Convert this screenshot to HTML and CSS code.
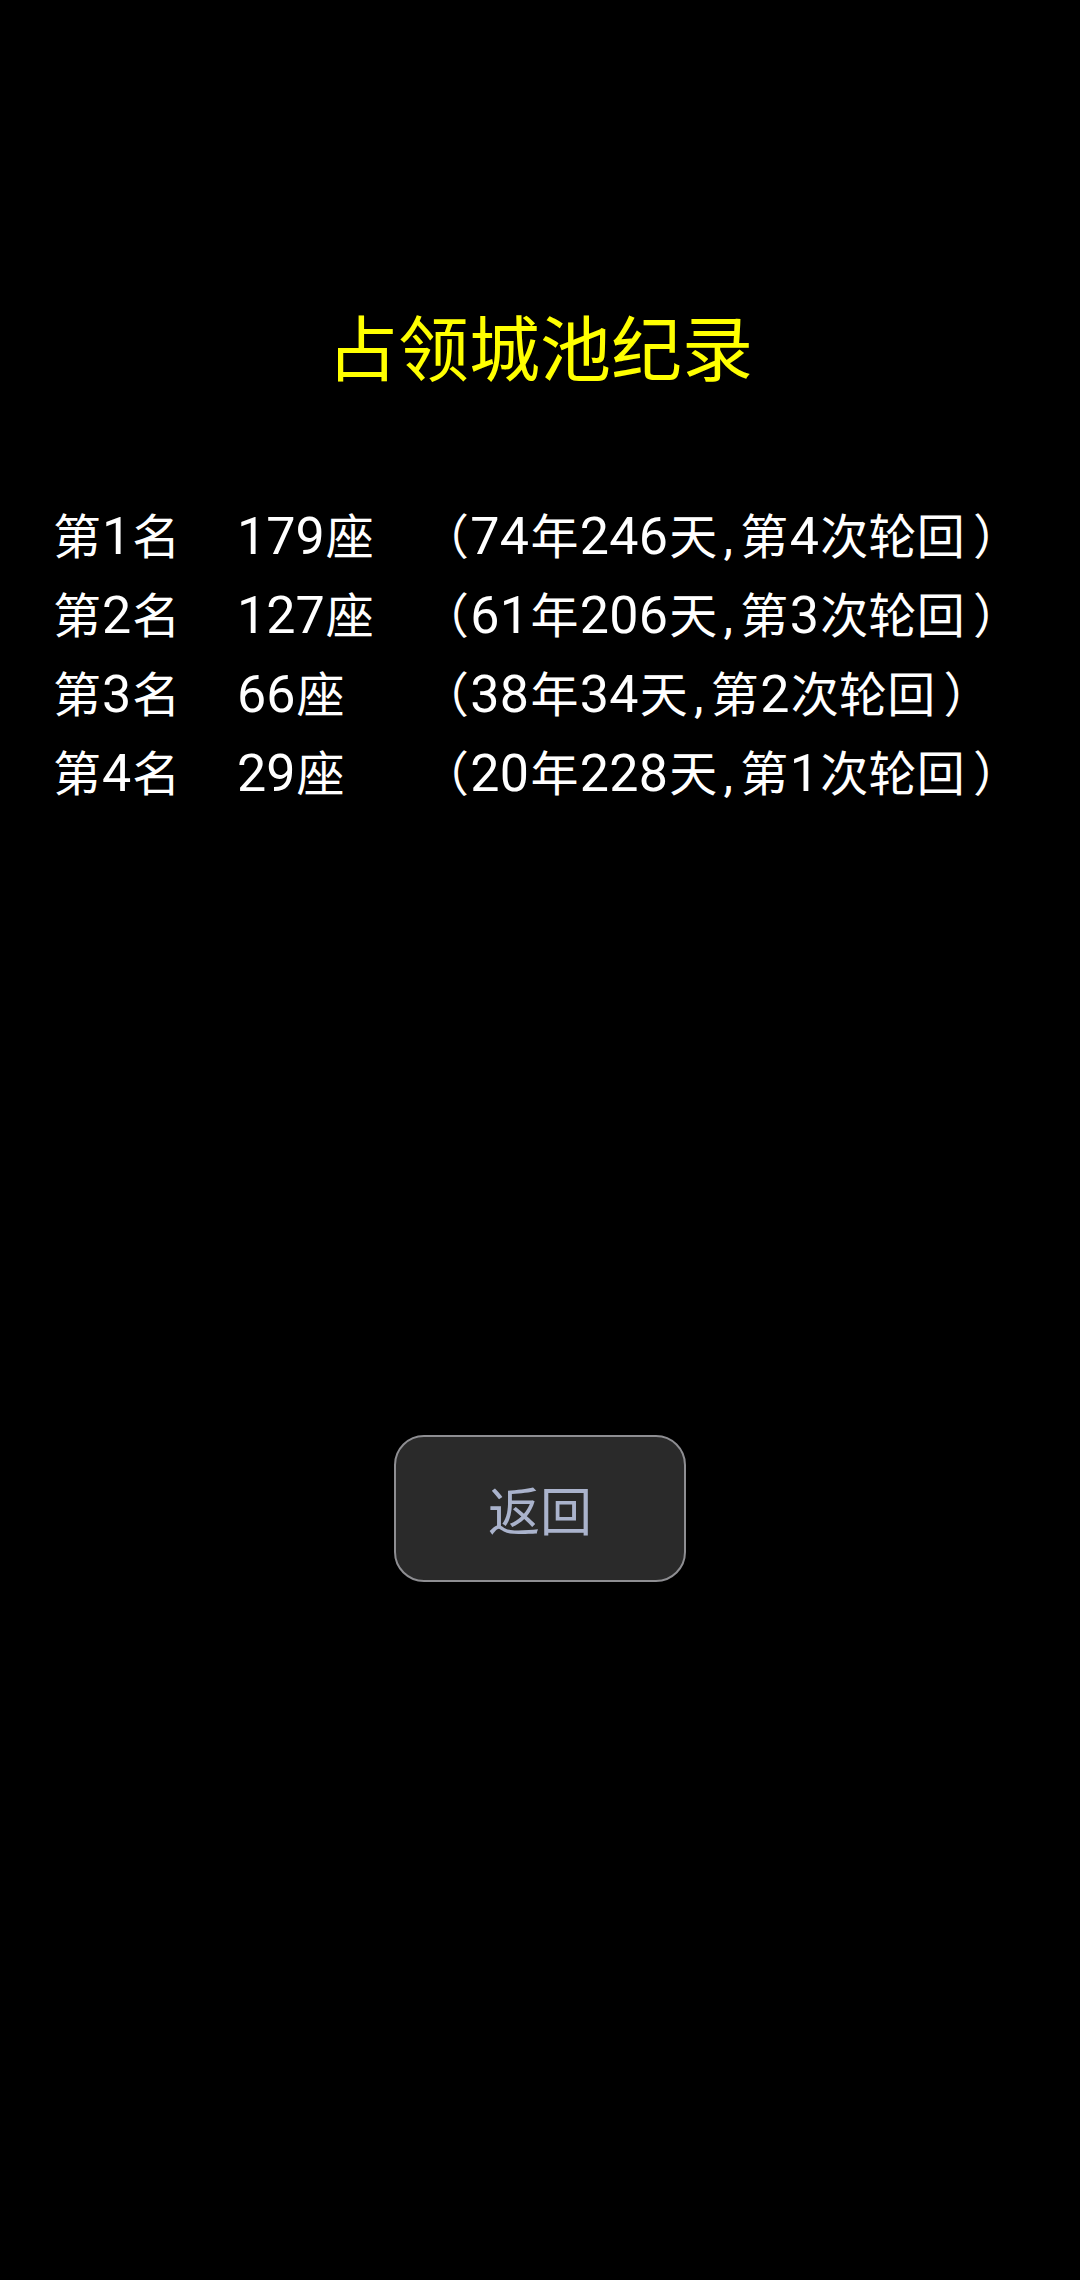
FILE: index.html
```html
<!DOCTYPE html>
<html lang="zh-CN">

<head>
    <meta charset="UTF-8">
    <meta name="viewport" content="width=device-width, initial-scale=1.0">
    <title>占领城池纪录</title>
    <link rel="stylesheet" href="styles.css">
</head>

<body>

    <div class="page">
        <h1 class="title">占领城池纪录</h1>

        <div class="records">
            <div class="record">
                <span class="rank">第<span class="num">1</span>名</span>
                <span class="count"><span class="num">179</span>座</span>
                <span class="info">（<span class="num">74</span>年<span class="num">246</span>天<span class="comma">,</span>第<span class="num">4</span>次轮回<span class="close">）</span></span>
            </div>
            <div class="record">
                <span class="rank">第<span class="num">2</span>名</span>
                <span class="count"><span class="num">127</span>座</span>
                <span class="info">（<span class="num">61</span>年<span class="num">206</span>天<span class="comma">,</span>第<span class="num">3</span>次轮回<span class="close">）</span></span>
            </div>
            <div class="record">
                <span class="rank">第<span class="num">3</span>名</span>
                <span class="count"><span class="num">66</span>座</span>
                <span class="info">（<span class="num">38</span>年<span class="num">34</span>天<span class="comma">,</span>第<span class="num">2</span>次轮回<span class="close">）</span></span>
            </div>
            <div class="record">
                <span class="rank">第<span class="num">4</span>名</span>
                <span class="count"><span class="num">29</span>座</span>
                <span class="info">（<span class="num">20</span>年<span class="num">228</span>天<span class="comma">,</span>第<span class="num">1</span>次轮回<span class="close">）</span></span>
            </div>
        </div>

        <div class="actions">
            <button class="back-btn">返回</button>
        </div>
    </div>

</body>

</html>
```

FILE: styles.css
```css
body {
    background-color: #000;
    color: #fff;
    font-family: "Noto Sans CJK SC", "Noto Sans", sans-serif;
    margin: 0;
    padding: 0;
}

.page {
    padding-top: 294px;
}

.title {
    margin: 0;
    font-size: 71px;
    font-weight: normal;
    line-height: 100px;
    color: #ffff00;
    text-align: center;
}

.records {
    margin-top: 100px;
    padding-left: 53px;
}

.record {
    display: grid;
    grid-template-columns: 183px 185px auto;
    font-size: 48px;
    line-height: 79px;
    white-space: nowrap;
    text-spacing-trim: space-all;
}

.info {
    letter-spacing: 0.3px;
}

/* digits are drawn a bit larger than the hanzi */
.num {
    font-family: Roboto, "Noto Sans CJK SC", sans-serif;
    font-size: 52px;
    line-height: 1;
    padding: 0 1px;
}

.comma {
    font-family: Roboto, sans-serif;
    padding: 0 7px 0 6px;
    line-height: 1;
}

.close {
    padding-left: 8px;
}

.actions {
    display: flex;
    justify-content: center;
    margin-top: 625px;
}

.back-btn {
    width: 292px;
    height: 147px;
    background-color: #2a2a2a;
    border: 2px solid #8e8e92;
    border-radius: 30px;
    color: #aab3cc;
    font-family: "Noto Sans CJK SC", sans-serif;
    font-size: 52px;
    padding: 0;
    cursor: pointer;
}
```
